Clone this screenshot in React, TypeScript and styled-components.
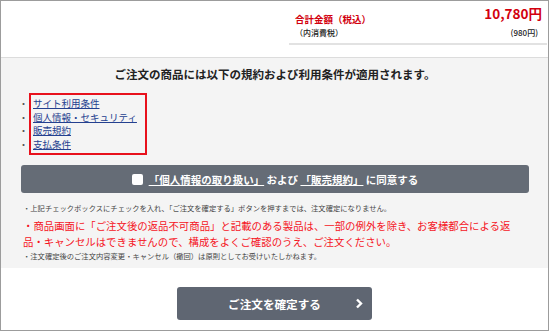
import styled, { createGlobalStyle } from 'styled-components';

const GlobalStyle = createGlobalStyle`
  html, body {
    margin: 0;
    padding: 0;
    background: #ffffff;
  }
  body {
    font-family: "Noto Sans CJK JP", "Noto Sans", sans-serif;
    color: #222222;
  }
`;

const Frame = styled.div`
  box-sizing: border-box;
  width: 549px;
  height: 331px;
  border: 1px solid #9c9c9c;
  display: flex;
  flex-direction: column;
  background: #ffffff;
`;

const Summary = styled.section`
  height: 56px;
  display: flex;
  justify-content: flex-end;
  padding-right: 1px;
`;

const PriceBox = styled.div`
  box-sizing: border-box;
  width: 258px;
  height: 44px;
  padding: 3px 5px 0 6px;
  border-bottom: 2px solid #e2e2e2;
`;

const PriceRow = styled.div`
  display: flex;
  justify-content: space-between;
  align-items: flex-start;
`;

const TotalLabel = styled.span`
  margin-top: 9px;
  font-size: 9.5px;
  line-height: 12px;
  font-weight: 700;
  color: #d2000e;
`;

const TotalAmount = styled.span`
  font-size: 13.5px;
  line-height: 18px;
  font-weight: 700;
  color: #d2000e;
`;

const TaxRow = styled(PriceRow)`
  margin-top: 2px;
  padding-right: 4px;
`;

const TaxText = styled.span`
  font-size: 8px;
  line-height: 12px;
  font-weight: 500;
  color: #222222;
`;

const Terms = styled.section`
  box-sizing: border-box;
  height: 211px;
  background: #f4f4f4;
  border-top: 1px solid #dcdcdc;
  padding: 8px 19px 0 20px;
`;

const Heading = styled.h2`
  margin: 0;
  text-align: center;
  font-size: 11.5px;
  line-height: 16px;
  font-weight: 700;
  color: #222222;
`;

const LinkList = styled.ul`
  box-sizing: border-box;
  width: 118px;
  margin: 11px 0 0 8px;
  padding: 2px 0 2px 2px;
  border: 2px solid #e8111c;
  list-style: none;
`;

const LinkItem = styled.li`
  list-style-type: "・\u2002";
  list-style-position: outside;
  font-size: 9.5px;
  line-height: 13.5px;

  &::marker {
    color: #555555;
  }
`;

const TermLink = styled.a`
  color: #24408f;
  text-decoration: underline;
  cursor: pointer;
`;

const AgreeBar = styled.label`
  box-sizing: border-box;
  height: 28px;
  margin-top: 10px;
  display: flex;
  align-items: center;
  justify-content: center;
  gap: 6px;
  background: #656c76;
  border-radius: 3px;
  color: #ffffff;
  font-size: 10.5px;
  font-weight: 700;
  cursor: pointer;
`;

const Check = styled.input`
  appearance: none;
  width: 11px;
  height: 11px;
  margin: 0;
  background: #ffffff;
  border-radius: 2px;
`;

const DocName = styled.span`
  text-decoration: underline;
`;

const Notes = styled.div`
  margin-top: 8px;
  padding-left: 2px;
`;

const SmallNote = styled.p<{ $lh: number }>`
  margin: 0;
  font-size: 7.3px;
  line-height: ${(p) => p.$lh}px;
  color: #444444;
`;

const RedNote = styled.p`
  margin: 3px 0 0;
  font-size: 10.4px;
  line-height: 16px;
  color: #f5141e;
`;

const Confirm = styled.section`
  flex: 1;
  display: flex;
  justify-content: center;
  align-items: flex-start;
  padding-top: 19px;
`;

const ConfirmButton = styled.button`
  position: relative;
  box-sizing: border-box;
  width: 195px;
  height: 33px;
  border: none;
  border-radius: 3px;
  background: #5f6672;
  color: #ffffff;
  font-family: inherit;
  font-size: 11.6px;
  font-weight: 700;
  cursor: pointer;
`;

const Chevron = styled.svg`
  position: absolute;
  right: 9px;
  top: 11px;
`;

const links = ['サイト利用条件', '個人情報・セキュリティ', '販売規約', '支払条件'];

export default function App() {
  return (
    <>
      <GlobalStyle />
      <Frame>
        <Summary>
          <PriceBox>
            <PriceRow>
              <TotalLabel>合計金額（税込）</TotalLabel>
              <TotalAmount>10,780円</TotalAmount>
            </PriceRow>
            <TaxRow>
              <TaxText>（内消費税）</TaxText>
              <TaxText>(980円)</TaxText>
            </TaxRow>
          </PriceBox>
        </Summary>

        <Terms>
          <Heading>ご注文の商品には以下の規約および利用条件が適用されます。</Heading>

          <LinkList>
            {links.map((name) => (
              <LinkItem key={name}>
                <TermLink>{name}</TermLink>
              </LinkItem>
            ))}
          </LinkList>

          <AgreeBar>
            <Check type="checkbox" />
            <span>
              <DocName>「個人情報の取り扱い」</DocName> および <DocName>「販売規約」</DocName> に同意する
            </span>
          </AgreeBar>

          <Notes>
            <SmallNote $lh={14}>
              ・上記チェックボックスにチェックを入れ、「ご注文を確定する」ボタンを押すまでは、注文確定になりません。
            </SmallNote>
            <RedNote>
              ・商品画面に「ご注文後の返品不可商品」と記載のある製品は、一部の例外を除き、お客様都合による返品・キャンセルはできませんので、構成をよくご確認のうえ、ご注文ください。
            </RedNote>
            <SmallNote $lh={12}>
              ・注文確定後のご注文内容変更・キャンセル（撤回）は原則としてお受けいたしかねます。
            </SmallNote>
          </Notes>
        </Terms>

        <Confirm>
          <ConfirmButton type="button">
            ご注文を確定する
            <Chevron width="8" height="11" viewBox="0 0 8 11">
              <polyline points="2,1.5 6,5.5 2,9.5" fill="none" stroke="#ffffff" strokeWidth="2.4" />
            </Chevron>
          </ConfirmButton>
        </Confirm>
      </Frame>
    </>
  );
}
